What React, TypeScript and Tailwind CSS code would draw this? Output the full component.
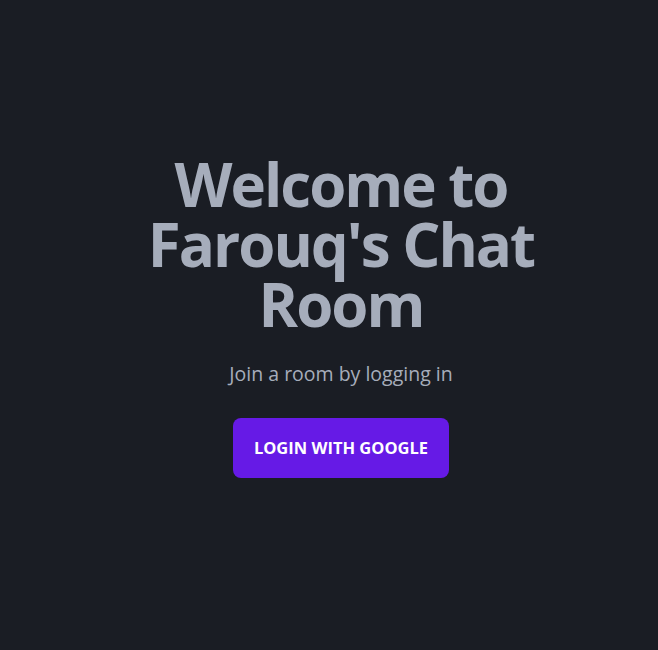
export default function App() {
  return (
    <div
      className="flex min-h-screen items-center justify-center bg-[#1a1d24] pb-[18px] pl-[24px] text-center text-[#a6adbb]"
      style={{ fontFamily: '"Open Sans", "Noto Sans", sans-serif' }}
    >
      <div className="flex max-w-md flex-col items-center">
        <h1 className="text-[60px] font-bold leading-[60px] tracking-[-2px]">
          Welcome to Farouq's Chat Room
        </h1>
        <p className="mt-[26px] text-[19.5px] leading-[28px]">Join a room by logging in</p>
        <button className="mt-[30px] h-[60px] w-[216px] rounded-lg bg-[#661ae6] text-[16.5px] font-bold uppercase text-white">
          Login with Google
        </button>
      </div>
    </div>
  );
}
